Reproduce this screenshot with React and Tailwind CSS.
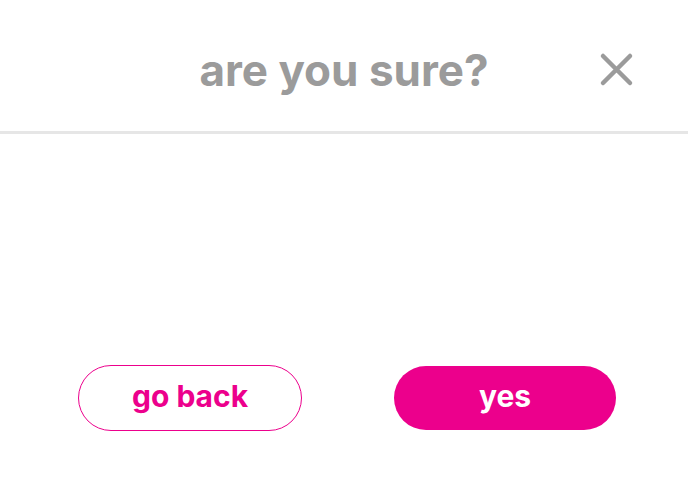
import React from 'react';

const ConfirmDialog = () => {
    return (
        <div className="w-[688px] h-[485px] bg-white flex flex-col" style={{ fontFamily: 'Inter, "Open Sans", sans-serif' }}>
            <header className="relative h-[134px] flex items-center justify-center border-b-[3px] border-[#e6e6e6]">
                <h1 className="text-[44px] font-bold tracking-[0px] text-[#9b9b9b] pt-[8px]">are you sure?</h1>
                <button className="absolute left-[599px] top-[52px] w-[35px] h-[35px] flex items-center justify-center text-[#9b9b9b]">
                    <svg width="35" height="35" viewBox="0 0 35 35" fill="none" stroke="currentColor" strokeWidth="4.5" strokeLinecap="round">
                        <path d="M4 4 L31 31 M31 4 L4 31" />
                    </svg>
                </button>
            </header>

            <main className="flex-1 flex items-start pt-[231px] pl-[78px] gap-[92px]">
                <button className="w-[224px] h-[66px] rounded-full border border-[#ec008c] text-[#ec008c] text-[30px] font-bold flex items-center justify-center pb-[3px]">
                    go back
                </button>
                <button className="w-[222px] h-[64px] mt-[1px] rounded-full bg-[#ec008c] text-white text-[30px] font-bold flex items-center justify-center pb-[3px]">
                    yes
                </button>
            </main>
        </div>
    );
};

export default function App() {
    return <ConfirmDialog />;
}
